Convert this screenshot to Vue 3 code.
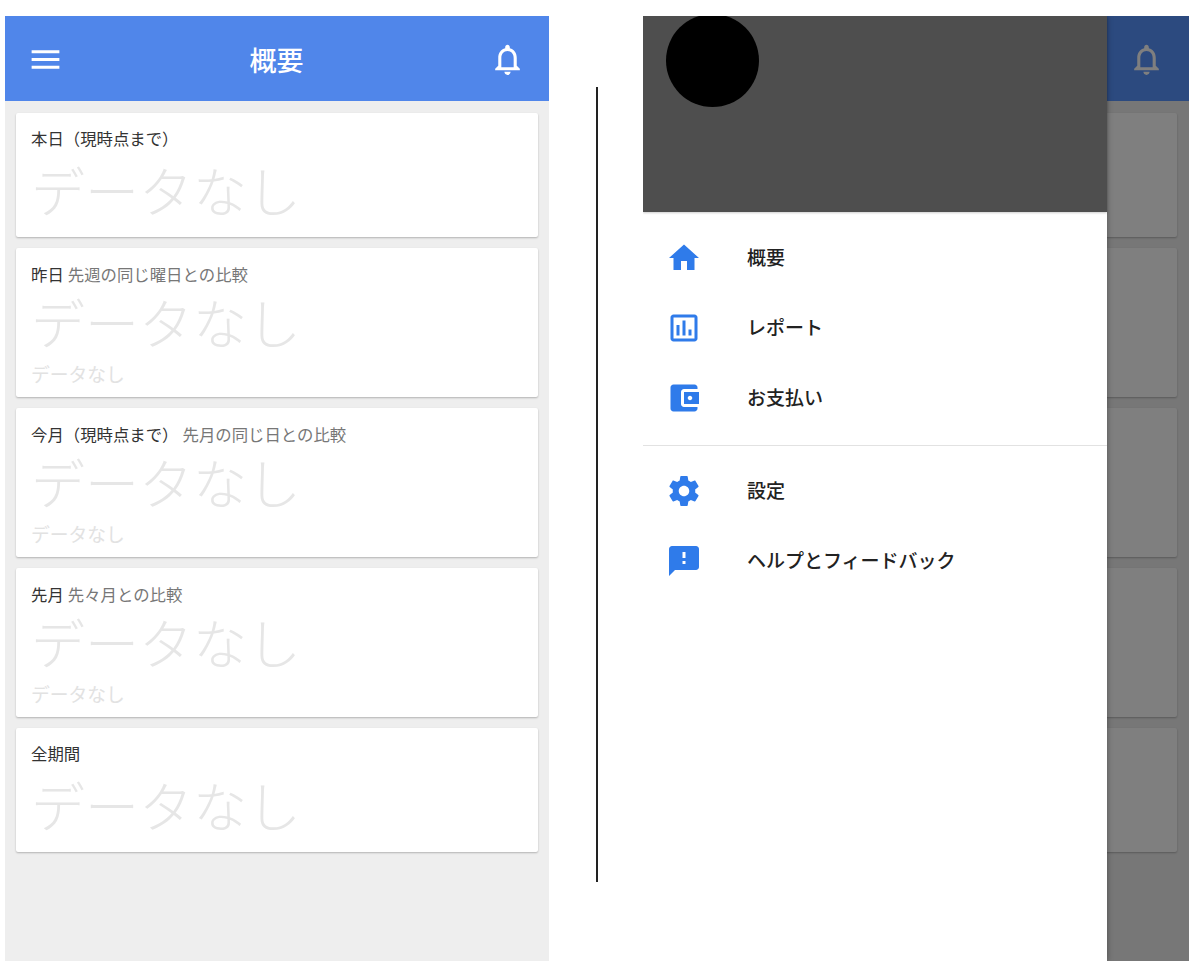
<script setup>
const cards = [
  { title: '本日（現時点まで）', compare: '', sub: false },
  { title: '昨日', compare: '先週の同じ曜日との比較', sub: true },
  { title: '今月（現時点まで）', compare: '先月の同じ日との比較', sub: true },
  { title: '先月', compare: '先々月との比較', sub: true },
  { title: '全期間', compare: '', sub: false }
]
const bell = 'M12 22c1.1 0 2-.9 2-2h-4c0 1.1.9 2 2 2zm6-6v-5c0-3.07-1.63-5.64-4.5-6.32V4c0-.83-.67-1.5-1.5-1.5s-1.5.67-1.5 1.5v.68C7.64 5.36 6 7.92 6 11v5l-2 2v1h16v-1l-2-2zm-2 1H8v-6c0-2.48 1.51-4.5 4-4.5s4 2.02 4 4.5v6z'
const icons = {
  home: 'M10 20v-6h4v6h5v-8h3L12 3 2 12h3v8z',
  report: 'M19 3H5c-1.1 0-2 .9-2 2v14c0 1.1.9 2 2 2h14c1.1 0 2-.9 2-2V5c0-1.1-.9-2-2-2zm0 16H5V5h14v14zM7 10h2v7H7zM11 7h2v10h-2zM15 13h2v4h-2z',
  wallet: 'M21 18v1c0 1.1-.9 2-2 2H5c-1.11 0-2-.9-2-2V5c0-1.1.89-2 2-2h14c1.1 0 2 .9 2 2v1h-9c-1.11 0-2 .9-2 2v8c0 1.1.89 2 2 2h9zm-9-2h10V8H12v8zm4-2.5c-.83 0-1.5-.67-1.5-1.5s.67-1.5 1.5-1.5 1.5.67 1.5 1.5-.67 1.5-1.5 1.5z',
  gear: 'M19.43 12.98c.04-.32.07-.64.07-.98s-.03-.66-.07-.98l2.11-1.65c.19-.15.24-.42.12-.64l-2-3.46c-.12-.22-.39-.3-.61-.22l-2.49 1c-.52-.4-1.08-.73-1.69-.98l-.38-2.65C14.46 2.18 14.25 2 14 2h-4c-.25 0-.46.18-.49.42l-.38 2.65c-.61.25-1.17.59-1.69.98l-2.49-1c-.23-.09-.49 0-.61.22l-2 3.46c-.13.22-.07.49.12.64l2.11 1.65c-.04.32-.07.65-.07.98s.03.66.07.98l-2.11 1.65c-.19.15-.24.42-.12.64l2 3.46c.12.22.39.3.61.22l2.49-1c.52.4 1.08.73 1.69.98l.38 2.65c.03.24.24.42.49.42h4c.25 0 .46-.18.49-.42l.38-2.65c.61-.25 1.17-.59 1.69-.98l2.49 1c.23.09.49 0 .61-.22l2-3.46c.12-.22.07-.49-.12-.64l-2.11-1.65zM12 15.5c-1.93 0-3.5-1.57-3.5-3.5s1.57-3.5 3.5-3.5 3.5 1.57 3.5 3.5-1.57 3.5-3.5 3.5z',
  feedback: 'M20 2H4c-1.1 0-1.99.9-1.99 2L2 22l4-4h14c1.1 0 2-.9 2-2V4c0-1.1-.9-2-2-2zm-7 12h-2v-2h2v2zm0-4h-2V6h2v4z'
}
const mainMenu = [
  { label: '概要', icon: icons.home },
  { label: 'レポート', icon: icons.report },
  { label: 'お支払い', icon: icons.wallet }
]
const subMenu = [
  { label: '設定', icon: icons.gear },
  { label: 'ヘルプとフィードバック', icon: icons.feedback }
]
</script>

<template>
  <div class="stage">
    <section class="phone">
      <header class="bar">
        <svg class="bar-icon" viewBox="0 0 24 24"><path d="M3 18h18v-2H3v2zm0-5h18v-2H3v2zm0-7v2h18V6H3z" /></svg>
        <h1 class="bar-title">概要</h1>
        <svg class="bar-icon" viewBox="0 0 24 24"><path :d="bell" /></svg>
      </header>
      <div class="cards">
        <article v-for="c in cards" :key="c.title" class="card" :class="{ 'card-sub': c.sub }">
          <p class="card-label">{{ c.title }}<span v-if="c.compare" class="compare">{{ c.compare }}</span></p>
          <p class="big">データなし</p>
          <p v-if="c.sub" class="small">データなし</p>
        </article>
      </div>
    </section>

    <div class="divider"></div>

    <section class="phone phone-dim">
      <header class="bar">
        <svg class="bar-icon" viewBox="0 0 24 24"><path d="M3 18h18v-2H3v2zm0-5h18v-2H3v2zm0-7v2h18V6H3z" /></svg>
        <h1 class="bar-title"></h1>
        <svg class="bar-icon" viewBox="0 0 24 24"><path :d="bell" /></svg>
      </header>
      <div class="cards">
        <article v-for="c in cards" :key="c.title" class="card" :class="c.sub ? 'card-blank-sub' : 'card-blank'"></article>
      </div>
      <div class="scrim"></div>
      <aside class="drawer">
        <div class="drawer-head"><div class="avatar"></div></div>
        <nav class="menu menu-main">
          <a v-for="m in mainMenu" :key="m.label" class="item">
            <span class="item-icon"><svg viewBox="0 0 24 24"><path :d="m.icon" /></svg></span>
            <span class="item-label">{{ m.label }}</span>
          </a>
        </nav>
        <nav class="menu menu-sub">
          <a v-for="m in subMenu" :key="m.label" class="item">
            <span class="item-icon"><svg viewBox="0 0 24 24"><path :d="m.icon" /></svg></span>
            <span class="item-label">{{ m.label }}</span>
          </a>
        </nav>
      </aside>
    </section>
  </div>
</template>

<style scoped>
.stage {
  display: flex;
  align-items: flex-start;
  height: 972px;
  box-sizing: border-box;
  padding: 16px 11px 11px 5px;
  background: #fff;
  overflow: hidden;
  font-family: "Noto Sans CJK JP", "Noto Sans", sans-serif;
}
.phone {
  position: relative;
  width: 544px;
  height: 945px;
  flex: none;
  background: #eee;
  overflow: hidden;
}
.phone-dim { width: 546px; }
.bar {
  display: flex;
  align-items: center;
  justify-content: space-between;
  height: 85px;
  padding: 2px 23px 0 22px;
  background: #5086ea;
  box-sizing: border-box;
}
.phone-dim .bar {
  padding-right: 24px;
  background: #5894ff;
}
.bar-icon { width: 37px; height: 37px; fill: #fff; flex: none; }
.bar-title {
  margin: 0;
  color: #fff;
  font-size: 27px;
  font-weight: 500;
  line-height: 1;
}
.cards {
  display: flex;
  flex-direction: column;
  gap: 11px;
  padding: 12px 11px;
}
.phone-dim .cards { padding-right: 12px; }
.card {
  height: 124px;
  box-sizing: border-box;
  padding: 15px 15px 0;
  background: #fff;
  border-radius: 2px;
  box-shadow: 0 1px 2px rgba(0, 0, 0, .25);
}
.card-sub { height: 149px; padding-top: 16px; }
.card-blank { height: 124px; }
.card-blank-sub { height: 149px; }
.card-label {
  margin: 0;
  color: #333;
  font-size: 16.4px;
  line-height: 20px;
}
.compare { margin-left: 4px; color: #777; }
.big {
  margin: 5px 0 0;
  color: #e6e6e6;
  font-size: 54px;
  font-weight: 300;
  line-height: 74px;
}
.card-sub .big { margin-top: 1px; }
.small {
  margin: 4px 0 0;
  color: #e2e2e2;
  font-size: 18.8px;
  line-height: 22px;
}
.divider {
  width: 1.5px;
  height: 795px;
  margin: 71px 45.5px 0 47px;
  background: #222;
  flex: none;
}
.scrim {
  position: absolute;
  inset: 0;
  background: rgba(0, 0, 0, .5);
}
.drawer {
  position: absolute;
  top: 0;
  bottom: 0;
  left: 0;
  width: 464px;
  background: #fff;
  box-shadow: 0 0 6px rgba(0, 0, 0, .35);
}
.drawer-head {
  height: 196px;
  background: #4e4e4e;
  overflow: hidden;
  box-shadow: 0 1px 2px rgba(0, 0, 0, .2);
}
.avatar {
  width: 93px;
  height: 93px;
  margin: -2px 0 0 23px;
  border-radius: 50%;
  background: #000;
}
.menu { display: flex; flex-direction: column; }
.menu-main {
  padding: 11px 0 12px;
  border-bottom: 1.5px solid #e2e2e2;
}
.menu-sub { padding: 10px 0; }
.item {
  display: flex;
  align-items: center;
  height: 70px;
  color: #222;
  font-size: 19px;
  font-weight: 500;
}
.item-label { padding-bottom: 4px; }
.item-icon {
  display: flex;
  justify-content: center;
  width: 36px;
  margin: 0 45px 0 23px;
}
.item-icon svg { width: 36px; height: 36px; fill: #2f7bea; }
</style>
